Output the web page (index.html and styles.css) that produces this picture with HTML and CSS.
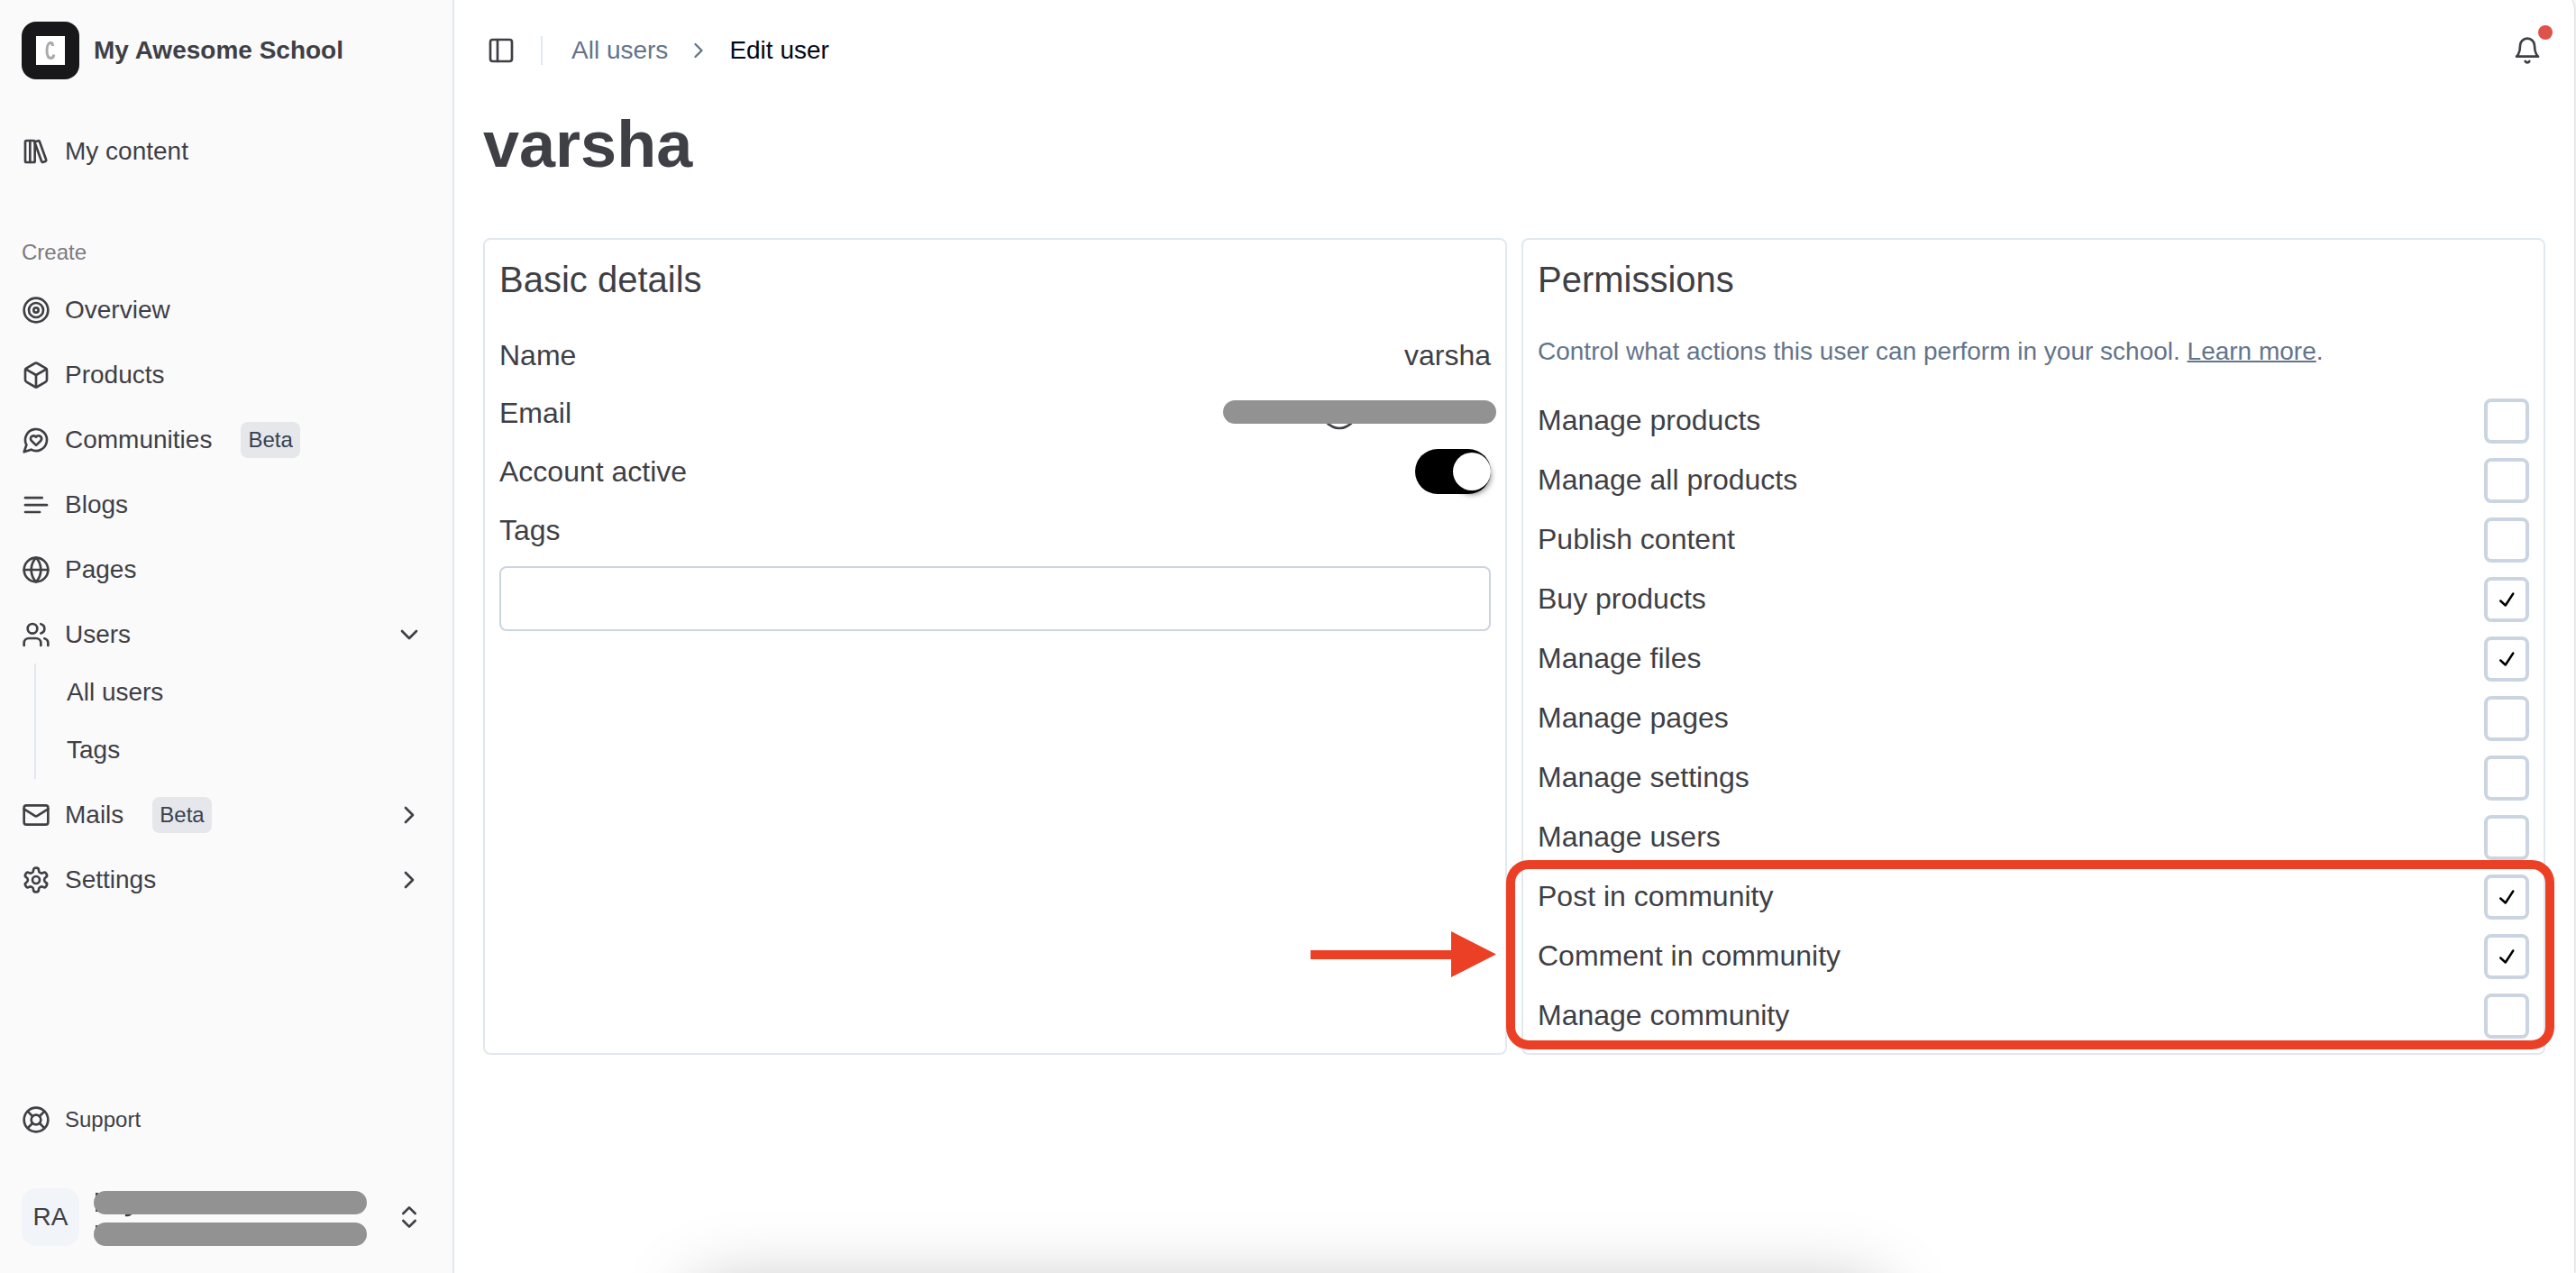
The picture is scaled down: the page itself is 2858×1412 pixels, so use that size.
FILE: index.html
```html
<!DOCTYPE html>
<html lang="en">
<head>
<meta charset="utf-8">
<meta name="viewport" content="width=device-width, initial-scale=1">
<title>Edit user</title>
<link rel="stylesheet" href="styles.css">
</head>
<body>
<div class="app">
  <aside class="sidebar">
    <a class="brand" href="#">
      <span class="brand-logo">
        <svg viewBox="0 0 32 32" aria-hidden="true"><rect width="32" height="32" fill="#fff"/><path d="M18.500 11C18.500 8.500 17.800 7.500 16.300 7.500C13.500 7.500 12 11.500 12 16C12 21 13.500 24.500 16.500 24.500C18.500 24.500 19.500 23 19.800 20.500" fill="none" stroke="#aaa" stroke-width="3"/></svg>
      </span>
      <span class="brand-name">My Awesome School</span>
    </a>
    <nav class="nav">
      <a class="nav-item" href="#">
        <svg class="icon" viewBox="0 0 24 24"><rect width="8" height="18" x="3" y="3" rx="1"/><path d="M7 3v18"/><path d="M20.400 18.900c.2.5-.1 1.100-.6 1.300l-1.900.7c-.5.2-1.100-.1-1.300-.6L11.100 5.100c-.2-.5.1-1.100.6-1.300l1.900-.7c.5-.2 1.100.1 1.300.6Z"/></svg>
        <span>My content</span>
      </a>
    </nav>
    <nav class="nav" aria-labelledby="create-label">
      <h2 class="nav-label" id="create-label">Create</h2>
      <ul class="nav-list">
        <li><a class="nav-item" href="#">
          <svg class="icon" viewBox="0 0 24 24"><circle cx="12" cy="12" r="10"/><circle cx="12" cy="12" r="6"/><circle cx="12" cy="12" r="2"/></svg>
          <span>Overview</span></a></li>
        <li><a class="nav-item" href="#">
          <svg class="icon" viewBox="0 0 24 24"><path d="M21 8a2 2 0 0 0-1-1.730l-7-4a2 2 0 0 0-2 0l-7 4A2 2 0 0 0 3 8v8a2 2 0 0 0 1 1.730l7 4a2 2 0 0 0 2 0l7-4A2 2 0 0 0 21 16Z"/><path d="m3.300 7 8.700 5 8.700-5"/><path d="M12 22V12"/></svg>
          <span>Products</span></a></li>
        <li><a class="nav-item" href="#">
          <svg class="icon" viewBox="0 0 24 24"><path d="M7.900 20A9 9 0 1 0 4 16.100L2 22Z"/><path d="M15.800 9.200a2.500 2.500 0 0 0-3.500 0l-.3.400-.350-.3a2.420 2.420 0 1 0-3.200 3.600l3.600 3.500 3.600-3.500c1.200-1.200 1.100-2.700.2-3.700"/></svg>
          <span>Communities</span><span class="badge">Beta</span></a></li>
        <li><a class="nav-item" href="#">
          <svg class="icon" viewBox="0 0 24 24"><path d="M17 6.100H3"/><path d="M21 12.100H3"/><path d="M15.100 18H3"/></svg>
          <span>Blogs</span></a></li>
        <li><a class="nav-item" href="#">
          <svg class="icon" viewBox="0 0 24 24"><circle cx="12" cy="12" r="10"/><path d="M12 2a14.500 14.500 0 0 0 0 20 14.500 14.500 0 0 0 0-20"/><path d="M2 12h20"/></svg>
          <span>Pages</span></a></li>
        <li>
          <button class="nav-item" type="button" aria-expanded="true">
            <svg class="icon" viewBox="0 0 24 24"><path d="M16 21v-2a4 4 0 0 0-4-4H6a4 4 0 0 0-4 4v2"/><circle cx="9" cy="7" r="4"/><path d="M22 21v-2a4 4 0 0 0-3-3.870"/><path d="M16 3.130a4 4 0 0 1 0 7.750"/></svg>
            <span>Users</span>
            <svg class="icon chevron" viewBox="0 0 24 24"><path d="m6 9 6 6 6-6"/></svg>
          </button>
          <ul class="subnav">
            <li><a class="subnav-item" href="#">All users</a></li>
            <li><a class="subnav-item" href="#">Tags</a></li>
          </ul>
        </li>
        <li><button class="nav-item" type="button" aria-expanded="false">
          <svg class="icon" viewBox="0 0 24 24"><rect width="20" height="16" x="2" y="4" rx="2"/><path d="m22 7-8.970 5.700a1.940 1.940 0 0 1-2.060 0L2 7"/></svg>
          <span>Mails</span><span class="badge">Beta</span>
          <svg class="icon chevron" viewBox="0 0 24 24"><path d="m9 18 6-6-6-6"/></svg></button></li>
        <li><button class="nav-item" type="button" aria-expanded="false">
          <svg class="icon" viewBox="0 0 24 24"><path d="M12.220 2h-.44a2 2 0 0 0-2 2v.18a2 2 0 0 1-1 1.730l-.43.25a2 2 0 0 1-2 0l-.15-.08a2 2 0 0 0-2.730.73l-.22.38a2 2 0 0 0 .73 2.730l.15.1a2 2 0 0 1 1 1.720v.51a2 2 0 0 1-1 1.740l-.15.09a2 2 0 0 0-.73 2.730l.22.38a2 2 0 0 0 2.730.73l.15-.08a2 2 0 0 1 2 0l.43.25a2 2 0 0 1 1 1.730V20a2 2 0 0 0 2 2h.44a2 2 0 0 0 2-2v-.18a2 2 0 0 1 1-1.730l.43-.25a2 2 0 0 1 2 0l.15.08a2 2 0 0 0 2.730-.73l.22-.39a2 2 0 0 0-.73-2.730l-.15-.08a2 2 0 0 1-1-1.740v-.5a2 2 0 0 1 1-1.740l.15-.09a2 2 0 0 0 .73-2.730l-.22-.38a2 2 0 0 0-2.730-.73l-.15.08a2 2 0 0 1-2 0l-.43-.25a2 2 0 0 1-1-1.730V4a2 2 0 0 0-2-2z"/><circle cx="12" cy="12" r="3"/></svg>
          <span>Settings</span>
          <svg class="icon chevron" viewBox="0 0 24 24"><path d="m9 18 6-6-6-6"/></svg></button></li>
      </ul>
    </nav>
    <div class="sidebar-footer">
      <a class="nav-item nav-item-small" href="#">
        <svg class="icon" viewBox="0 0 24 24"><circle cx="12" cy="12" r="10"/><path d="m4.930 4.930 4.240 4.240"/><path d="m14.830 9.170 4.240-4.240"/><path d="m14.830 14.830 4.240 4.240"/><path d="m9.170 14.830-4.240 4.240"/><circle cx="12" cy="12" r="4"/></svg>
        <span>Support</span>
      </a>
      <button class="account" type="button" aria-label="Account menu">
        <span class="avatar">RA</span>
        <svg class="account-text" viewBox="0 0 303 64" aria-hidden="true">
          <path d="M2 5h3v21H2zM2 41h2v17H2z" fill="#3f3f46"/>
          <path d="M35 29.500q5 1 7-2.500" fill="none" stroke="#3f3f46" stroke-width="3"/>
          <rect y="3" width="303" height="26" rx="13" fill="#929292"/>
          <rect y="38" width="303" height="26" rx="13" fill="#929292"/>
        </svg>
        <svg class="icon chevron" viewBox="0 0 24 24"><path d="m7 15 5 5 5-5"/><path d="m7 9 5-5 5 5"/></svg>
      </button>
    </div>
  </aside>

  <main class="main">
    <header class="topbar">
      <button class="icon-button" type="button" aria-label="Toggle sidebar">
        <svg class="icon" viewBox="0 0 24 24"><rect width="18" height="18" x="3" y="3" rx="2"/><path d="M9 3v18"/></svg>
      </button>
      <span class="divider"></span>
      <nav class="breadcrumb" aria-label="Breadcrumb">
        <a href="#">All users</a>
        <svg class="icon crumb-icon" viewBox="0 0 24 24"><path d="m9 18 6-6-6-6"/></svg>
        <span class="crumb-current" aria-current="page">Edit user</span>
      </nav>
      <button class="icon-button bell" type="button" aria-label="Notifications">
        <svg class="icon" viewBox="0 0 24 24"><path d="M6 8a6 6 0 0 1 12 0c0 7 3 9 3 9H3s3-2 3-9"/><path d="M10.300 21a1.940 1.940 0 0 0 3.400 0"/></svg>
        <span class="bell-dot"></span>
      </button>
    </header>

    <div class="content">
      <h1 class="title">varsha</h1>
      <div class="cards">
        <section class="card">
          <h2 class="card-title">Basic details</h2>
          <div class="fields">
            <div class="field"><span>Name</span><span>varsha</span></div>
            <div class="field">
              <span>Email</span>
              <svg class="redacted" viewBox="0 0 303 34" aria-hidden="true">
                <path d="M114 24Q129 38 144 24" fill="none" stroke="#3f3f46" stroke-width="2.500"/>
                <rect width="303" height="26" rx="13" fill="#929292"/>
              </svg>
            </div>
            <label class="field"><span>Account active</span><input class="switch" type="checkbox" role="switch" checked></label>
            <label class="field" for="tags">Tags</label>
            <input class="text-input" id="tags" type="text">
          </div>
        </section>

        <section class="card">
          <h2 class="card-title">Permissions</h2>
          <p class="card-note">Control what actions this user can perform in your school. <a href="#">Learn more</a>.</p>
          <div class="permissions">
            <label class="permission">Manage products<span class="check"><input type="checkbox"></span></label>
            <label class="permission">Manage all products<span class="check"><input type="checkbox"></span></label>
            <label class="permission">Publish content<span class="check"><input type="checkbox"></span></label>
            <label class="permission">Buy products<span class="check"><input type="checkbox" checked><svg viewBox="0 0 15 15"><use href="#tick"/></svg></span></label>
            <label class="permission">Manage files<span class="check"><input type="checkbox" checked><svg viewBox="0 0 15 15"><use href="#tick"/></svg></span></label>
            <label class="permission">Manage pages<span class="check"><input type="checkbox"></span></label>
            <label class="permission">Manage settings<span class="check"><input type="checkbox"></span></label>
            <label class="permission">Manage users<span class="check"><input type="checkbox"></span></label>
            <div class="permissions highlighted">
              <label class="permission">Post in community<span class="check"><input type="checkbox" checked><svg viewBox="0 0 15 15"><use href="#tick"/></svg></span></label>
              <label class="permission">Comment in community<span class="check"><input type="checkbox" checked><svg viewBox="0 0 15 15"><use href="#tick"/></svg></span></label>
              <label class="permission">Manage community<span class="check"><input type="checkbox"></span></label>
              <span class="highlight-frame"></span>
              <svg class="highlight-arrow" viewBox="0 0 206 52" aria-hidden="true"><path d="M0 21H156V0L206 25.500L156 51V31H0Z" fill="#eb4026"/></svg>
            </div>
          </div>
        </section>
      </div>
    </div>
  </main>
  <div class="bottom-shade"></div>
</div>
<svg class="symbols" aria-hidden="true">
  <symbol id="tick" viewBox="0 0 15 15"><path d="M11.4669 3.72684C11.7558 3.91574 11.8369 4.30308 11.648 4.59198L7.39799 11.092C7.29783 11.2452 7.13556 11.3467 6.95402 11.3699C6.77247 11.3931 6.58989 11.3355 6.45446 11.2124L3.70446 8.71241C3.44905 8.48022 3.43023 8.08494 3.66242 7.82953C3.89461 7.57412 4.28989 7.55529 4.5453 7.78749L6.75292 9.79441L10.6018 3.90792C10.7907 3.61902 11.178 3.53795 11.4669 3.72684Z"/></symbol>
</svg>
</body>
</html>
```

FILE: styles.css
```css
* { box-sizing: border-box; }

body {
  margin: 0;
  background: #fafafa;
  color: #3f3f46;
  font: 32px/48px "Liberation Sans", Arial, sans-serif;
}

h1, h2, p, ul { margin: 0; padding: 0; font-weight: 400; }
ul { list-style: none; }
a { color: inherit; text-decoration: none; }

button {
  padding: 0;
  border: 0;
  background: none;
  color: inherit;
  font: inherit;
  text-align: left;
  cursor: pointer;
}

svg { display: block; }
.symbols { position: absolute; width: 0; height: 0; }

.icon {
  flex: none;
  width: 32px;
  height: 32px;
  fill: none;
  stroke: currentColor;
  stroke-width: 2;
  stroke-linecap: round;
  stroke-linejoin: round;
}

.app {
  position: relative;
  display: flex;
  min-height: 100vh;
  overflow: hidden;
}

/* Sidebar */
.sidebar {
  flex: none;
  display: flex;
  flex-direction: column;
  width: 504px;
  padding: 24px 32px 30px 24px;
  border-right: 2px solid #e2e8f0;
  font-size: 28px;
  line-height: 40px;
}

.brand {
  display: flex;
  align-items: center;
  gap: 16px;
  margin-bottom: 48px;
}

.brand-logo, .avatar {
  flex: none;
  display: flex;
  align-items: center;
  justify-content: center;
  width: 64px;
  height: 64px;
  border-radius: 16px;
}

.brand-logo { background: #18181b; }
.brand-logo svg { width: 32px; height: 32px; }
.brand-name { font-weight: 700; }

.nav + .nav { margin-top: 48px; }

.nav-label {
  color: #7c7b80;
  font-size: 24px;
  line-height: 64px;
}

.nav-list {
  display: flex;
  flex-direction: column;
  gap: 8px;
}

.nav-item {
  display: flex;
  align-items: center;
  gap: 16px;
  width: 100%;
  height: 64px;
}

.nav-item-small { height: 56px; font-size: 24px; }
.chevron { margin-left: auto; }

.badge {
  margin-left: 16px;
  padding: 0 8px;
  border-radius: 8px;
  background: #e5e7eb;
  color: #374151;
  font-size: 24px;
}

.subnav {
  display: flex;
  flex-direction: column;
  gap: 8px;
  margin-left: 14px;
  padding: 4px 0 4px 34px;
  border-left: 2px solid #e2e8f0;
}

.subnav-item { display: block; line-height: 56px; }

.sidebar-footer {
  display: flex;
  flex-direction: column;
  gap: 48px;
  margin-top: auto;
}

.account {
  display: flex;
  align-items: center;
  gap: 16px;
  width: 100%;
}

.avatar { background: #f1f5f9; }
.account-text { width: 303px; height: 64px; }

/* Main panel */
.main {
  flex: 1;
  min-width: 0;
  margin-right: 2px;
  border-top-right-radius: 4px 14px;
  background: #fff;
  box-shadow: 1px 0 3px rgba(0, 0, 0, 0.15);
  clip-path: inset(0 -2px 0 0);
}

.topbar {
  display: flex;
  align-items: center;
  height: 112px;
  padding: 0 36px;
  font-size: 28px;
  line-height: 40px;
}

.icon-button { position: relative; }

.divider {
  width: 2px;
  height: 32px;
  margin: 0 32px 0 28px;
  background: #e2e8f0;
}

.breadcrumb {
  display: flex;
  align-items: center;
  gap: 20px;
  color: #64748b;
}

.crumb-icon { width: 28px; height: 28px; }
.crumb-current { color: #020817; }
.bell { margin-left: auto; }

.bell-dot {
  position: absolute;
  top: -12px;
  right: -12px;
  width: 16px;
  height: 16px;
  border-radius: 50%;
  background: #de524c;
}

.content { padding: 8px 32px 32px; }

.title {
  margin-bottom: 64px;
  font-size: 72px;
  font-weight: 700;
  line-height: 80px;
}

.cards {
  display: grid;
  grid-template-columns: 1fr 1fr;
  gap: 16px;
}

.card {
  padding: 16px;
  border: 2px solid #e2e8f0;
  border-radius: 8px;
}

.card-title {
  margin-bottom: 32px;
  font-size: 40px;
  line-height: 56px;
}

.card-note {
  margin-bottom: 32px;
  color: #64748b;
  font-size: 28px;
  line-height: 40px;
}

.card-note a {
  text-decoration: underline;
  text-decoration-thickness: 2px;
}

.fields, .permissions {
  display: flex;
  flex-direction: column;
  gap: 16px;
}

.field {
  position: relative;
  display: flex;
  align-items: center;
  justify-content: space-between;
}

.redacted {
  position: absolute;
  top: 10px;
  right: -6px;
  width: 303px;
  height: 34px;
}

.switch {
  appearance: none;
  width: 84px;
  height: 50px;
  margin: 0;
  padding: 4px 0;
  border-radius: 25px;
  background: #000;
}

.switch::before {
  content: "";
  display: block;
  width: 42px;
  height: 42px;
  border-radius: 50%;
  background: #fff;
  box-shadow: 0 4px 6px rgba(0, 0, 0, 0.5);
}

.switch:checked::before { margin-left: auto; }

.text-input {
  width: 100%;
  height: 72px;
  padding: 0 16px;
  border: 2px solid #cbd5e1;
  border-radius: 8px;
  background: #fff;
  color: inherit;
  font: inherit;
}

.permission {
  display: flex;
  align-items: flex-start;
  justify-content: space-between;
}

.check {
  display: grid;
  place-items: center;
  width: 50px;
  height: 50px;
}

.check > * { grid-area: 1 / 1; }

.check input {
  appearance: none;
  width: 50px;
  height: 50px;
  margin: 0;
  border: 4px solid #cbd5e1;
  border-radius: 8px;
  background: #fff;
}

.check svg { width: 30px; height: 30px; fill: #000; pointer-events: none; z-index: 1; }

/* Callout over the community permissions */
.highlighted { position: relative; }

.highlight-frame {
  position: absolute;
  inset: -16px -28px -12px -35px;
  border: 10px solid #eb4026;
  border-radius: 25px;
  pointer-events: none;
}

.highlight-arrow {
  position: absolute;
  top: 63px;
  left: -252px;
  width: 206px;
  height: 52px;
}

/* Soft shade rising from the bottom edge of the window */
.bottom-shade {
  position: absolute;
  right: 27%;
  bottom: -116px;
  left: 27%;
  height: 100px;
  box-shadow: 0 0 80px rgba(0, 0, 0, 0.26);
  pointer-events: none;
}
```
